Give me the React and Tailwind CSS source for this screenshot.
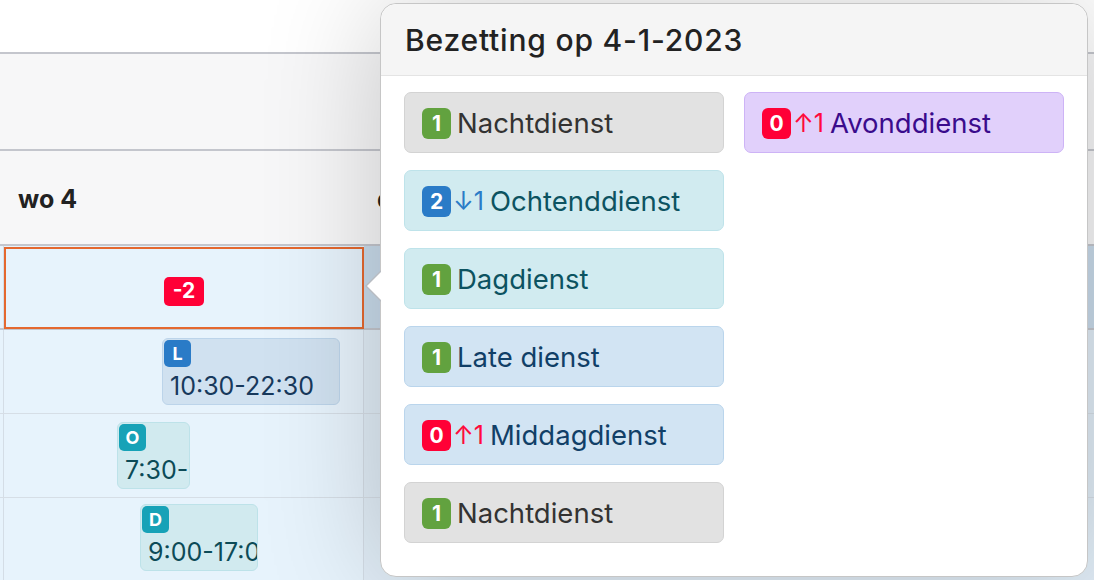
import React from 'react';

const FONT = { fontFamily: 'Inter, "Noto Sans", "Liberation Sans", sans-serif' };

// occupation rows shown in the popover
const leftItems = [
  { count: 1, badge: 'bg-[#62a23f]', name: 'Nachtdienst', tone: 'gray' },
  { count: 2, badge: 'bg-[#2a7bc7]', diff: '↓1', diffColor: 'text-[#2a7bc7]', name: 'Ochtenddienst', tone: 'teal' },
  { count: 1, badge: 'bg-[#62a23f]', name: 'Dagdienst', tone: 'teal' },
  { count: 1, badge: 'bg-[#62a23f]', name: 'Late dienst', tone: 'blue' },
  { count: 0, badge: 'bg-[#ff0036]', diff: '↑1', diffColor: 'text-[#ff0a3c]', name: 'Middagdienst', tone: 'blue' },
  { count: 1, badge: 'bg-[#62a23f]', name: 'Nachtdienst', tone: 'gray' },
];

const rightItems = [
  { count: 0, badge: 'bg-[#ff0036]', diff: '↑1', diffColor: 'text-[#ff0a3c]', name: 'Avonddienst', tone: 'purple' },
];

const tones = {
  gray: 'bg-[#e2e2e2] border-[#d3d3d3] text-[#333333]',
  teal: 'bg-[#d1ebf0] border-[#bee3ea] text-[#0c5361]',
  blue: 'bg-[#d2e4f3] border-[#bad5ec] text-[#113f67]',
  purple: 'bg-[#e1d0fb] border-[#cdb3f6] text-[#3a0b8c]',
};

const ShiftItem = ({ item }) => (
  <div className={`h-[61px] rounded-[7px] border flex items-center pl-[17px] pt-[2px] ${tones[item.tone]}`}>
    <span className={`w-[29px] h-[31px] rounded-[6px] flex items-center justify-center text-white font-bold text-[21px] ${item.badge}`}>
      {item.count}
    </span>
    {item.diff && <span className={`ml-[2px] text-[25px] ${item.diffColor}`}>{item.diff}</span>}
    <span className="ml-[6px] text-[27.5px]">{item.name}</span>
  </div>
);

const ShiftCard = ({ letter, time, className, badge, tone }) => (
  <div className={`absolute h-[67px] rounded-[6px] border overflow-hidden ${tone} ${className}`}>
    <span className={`absolute left-[1px] top-[1px] w-[27px] h-[27px] rounded-[5px] flex items-center justify-center text-white font-bold text-[18px] ${badge}`}>
      {letter}
    </span>
    <span className="absolute left-[7px] top-[29px] text-[25px] whitespace-nowrap">{time}</span>
  </div>
);

const App = () => {
  return (
    <div className="relative w-full h-[580px] overflow-hidden bg-white" style={FONT}>
      {/* Background roster table */}
      <div className="h-[52px] bg-white"></div>
      <div className="h-[99px] bg-[#f7f7f8] border-y-2 border-[#c4c6cd]"></div>
      <div className="h-[95px] bg-[#f7f7f8] border-b-2 border-[#c4c6cd] flex items-center pt-[5px]">
        <div className="w-[364px] pl-[18px] text-[25px] font-bold text-[#222]">wo 4</div>
        <div className="pl-[13px] text-[25px] font-bold text-[#222]">do 5</div>
      </div>
      <div className="flex h-[84px] border-b-2 border-[#c4c6cd] bg-[#e7f3fc]">
        <div className="w-[4px] border-r border-[#d4dde6]"></div>
        <div className="w-[360px] h-[82px] border-2 border-[#e4682f] flex items-center justify-center mt-[1px]">
          <span className="h-[29px] w-[40px] mt-[6px] rounded-[5px] bg-[#ff0036] text-white font-bold text-[21px] flex items-center justify-center">-2</span>
        </div>
        <div className="flex-1 bg-[#c9dbeb]"></div>
      </div>
      {[0, 1, 2].map((r) => (
        <div key={r} className="flex h-[84px] border-b border-[#d6dee6] bg-[#e7f3fc]">
          <div className="w-[4px] border-r border-[#d4dde6]"></div>
          <div className="relative w-[360px] border-r border-[#d4dde6]">
            {r === 0 && (
              <ShiftCard letter="L" time="10:30-22:30" badge="bg-[#2a7bc7]" tone="bg-[#d0e1f0] border-[#bcd4ea] text-[#17395c]" className="left-[158px] top-[8px] w-[178px]" />
            )}
            {r === 1 && (
              <ShiftCard letter="O" time="7:30-17:00" badge="bg-[#17a2b7]" tone="bg-[#d1eaef] border-[#bde2e9] text-[#0c4b57]" className="left-[113px] top-[8px] w-[73px]" />
            )}
            {r === 2 && (
              <ShiftCard letter="D" time="9:00-17:00" badge="bg-[#17a2b7]" tone="bg-[#d1eaef] border-[#bde2e9] text-[#0c4b57]" className="left-[136px] top-[6px] w-[118px]" />
            )}
          </div>
          <div className="flex-1 bg-[#e1edf7]"></div>
        </div>
      ))}

      {/* Popover with occupation of the day */}
      <div className="absolute left-[380px] top-[3px] w-[708px] h-[574px] bg-white rounded-[16px] border border-[#c6c6c6] shadow-[0_0_120px_rgba(0,0,0,0.2)]">
        <div className="absolute -left-[16px] top-[266px] w-0 h-0 border-y-[16px] border-y-transparent border-r-[16px] border-r-[#b8bcc2]"></div>
        <div className="absolute -left-[14px] top-[267px] w-0 h-0 border-y-[15px] border-y-transparent border-r-[15px] border-r-white"></div>
        <div className="h-[72px] bg-[#f5f5f5] border-b border-[#e4e4e4] rounded-t-[16px] flex items-center pl-[24px] pt-[2px]">
          <h3 className="text-[30px] font-medium text-[#222] tracking-[0.8px]">Bezetting op 4-1-2023</h3>
        </div>
        <div className="grid grid-cols-2 gap-x-[20px] px-[23px] pt-[16px]">
          <div className="flex flex-col gap-[17px]">
            {leftItems.map((item, i) => (
              <ShiftItem key={i} item={item} />
            ))}
          </div>
          <div className="flex flex-col gap-[17px]">
            {rightItems.map((item, i) => (
              <ShiftItem key={i} item={item} />
            ))}
          </div>
        </div>
      </div>
    </div>
  );
};

export default App;
